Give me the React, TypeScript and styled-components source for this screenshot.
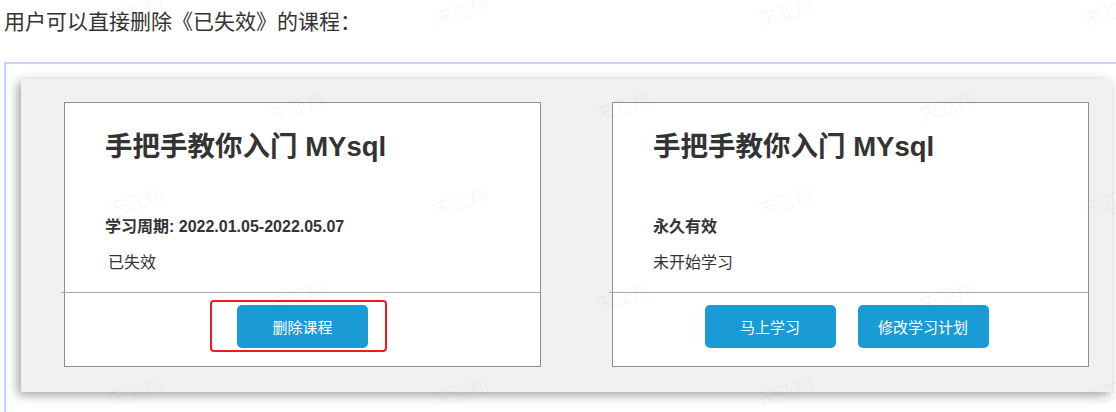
import React from 'react';
import styled, { createGlobalStyle } from 'styled-components';

const GlobalStyle = createGlobalStyle`
    html, body {
        margin: 0;
        padding: 0;
        background: #ffffff;
        overflow: hidden;
    }
    body {
        font-family: "Liberation Sans", "Noto Sans CJK SC", sans-serif;
        color: #333333;
    }
`;

const StyledPage = styled.div`
    position: relative;
    width: 1116px;
    height: 412px;
    padding-left: 4px;
    box-sizing: border-box;
    overflow: hidden;
`;

const StyledIntro = styled.p`
    margin: 0;
    padding-top: 10px;
    font-size: 21px;
    line-height: 24px;
    color: #333333;
`;

const StyledFrame = styled.div`
    margin-top: 28px;
    width: 1140px;
    height: 400px;
    border: 2px solid #c5d4fc;
    padding: 15px 0 0 15px;
`;

const StyledPanel = styled.div`
    width: 1091px;
    box-sizing: border-box;
    display: flex;
    gap: 71px;
    padding: 23px 23px 25px 43px;
    background: #f1f1f1;
    box-shadow: -3px 3px 10px rgba(0, 0, 0, 0.38);
`;

const StyledCard = styled.div`
    width: 477px;
    height: 265px;
    box-sizing: border-box;
    display: flex;
    flex-direction: column;
    background: #ffffff;
    border: 1px solid #8e8e8e;
`;

const StyledCardBody = styled.div`
    padding: 26px 40px 0;
`;

const StyledTitle = styled.h2`
    margin: 0 0 51px;
    font-size: 27.5px;
    line-height: 36px;
    font-weight: bold;
    color: #333333;
`;

const StyledLine = styled.div<{ $bold?: boolean; $indent?: number }>`
    font-size: 16px;
    line-height: 22px;
    font-weight: ${props => (props.$bold ? 'bold' : 'normal')};
    padding-left: ${props => props.$indent || 0}px;
    margin-bottom: 14px;
    color: #333333;
`;

const StyledFooter = styled.div<{ $shift?: number }>`
    margin-top: auto;
    margin-left: -4px;
    padding-left: 4px;
    padding-right: ${props => props.$shift || 0}px;
    margin-bottom: 6px;
    height: 67px;
    border-top: 1px solid #a8a8a8;
    display: flex;
    align-items: center;
    justify-content: center;
    gap: 22px;
`;

const StyledButton = styled.button`
    width: 131px;
    height: 43px;
    border: none;
    border-radius: 5px;
    background: #1a9bd5;
    color: #ffffff;
    font-family: "Liberation Sans", "Noto Sans CJK SC", sans-serif;
    font-size: 15px;
    cursor: pointer;
`;

const StyledHighlight = styled.span`
    position: relative;
    display: inline-flex;

    &::after {
        content: '';
        position: absolute;
        top: -5px;
        bottom: -4px;
        left: -27px;
        right: -19px;
        border: 2px solid #f01c1c;
        border-radius: 4px;
        pointer-events: none;
    }
`;

const StyledWatermarks = styled.div`
    position: absolute;
    inset: 0;
    pointer-events: none;
`;

const StyledMark = styled.span`
    position: absolute;
    font-size: 19px;
    font-weight: 300;
    line-height: 20px;
    color: rgba(0, 0, 0, 0.06);
    white-space: nowrap;
    transform: translate(-50%, -50%) rotate(-17deg);
`;

const marks: { x: number; y: number }[] = [];
[13, 108, 203, 298, 393].forEach((y, row) => {
    const start = row % 2 === 0 ? 136 : -27;
    for (let x = start; x < 1200; x += 325) marks.push({ x, y });
});

const App = () => {
    return (
        <>
            <GlobalStyle />
            <StyledPage>
                <StyledIntro>用户可以直接删除《已失效》的课程：</StyledIntro>
                <StyledFrame>
                    <StyledPanel>
                        <StyledCard>
                            <StyledCardBody>
                                <StyledTitle>手把手教你入门 MYsql</StyledTitle>
                                <StyledLine $bold>学习周期: 2022.01.05-2022.05.07</StyledLine>
                                <StyledLine $indent={3}>已失效</StyledLine>
                            </StyledCardBody>
                            <StyledFooter>
                                <StyledHighlight>
                                    <StyledButton>删除课程</StyledButton>
                                </StyledHighlight>
                            </StyledFooter>
                        </StyledCard>
                        <StyledCard>
                            <StyledCardBody>
                                <StyledTitle>手把手教你入门 MYsql</StyledTitle>
                                <StyledLine $bold>永久有效</StyledLine>
                                <StyledLine>未开始学习</StyledLine>
                            </StyledCardBody>
                            <StyledFooter $shift={8}>
                                <StyledButton>马上学习</StyledButton>
                                <StyledButton>修改学习计划</StyledButton>
                            </StyledFooter>
                        </StyledCard>
                    </StyledPanel>
                </StyledFrame>
                <StyledWatermarks>
                    {marks.map((m, i) => (
                        <StyledMark key={i} style={{ left: m.x, top: m.y }}>宋亚翔</StyledMark>
                    ))}
                </StyledWatermarks>
            </StyledPage>
        </>
    );
};

export default App;
